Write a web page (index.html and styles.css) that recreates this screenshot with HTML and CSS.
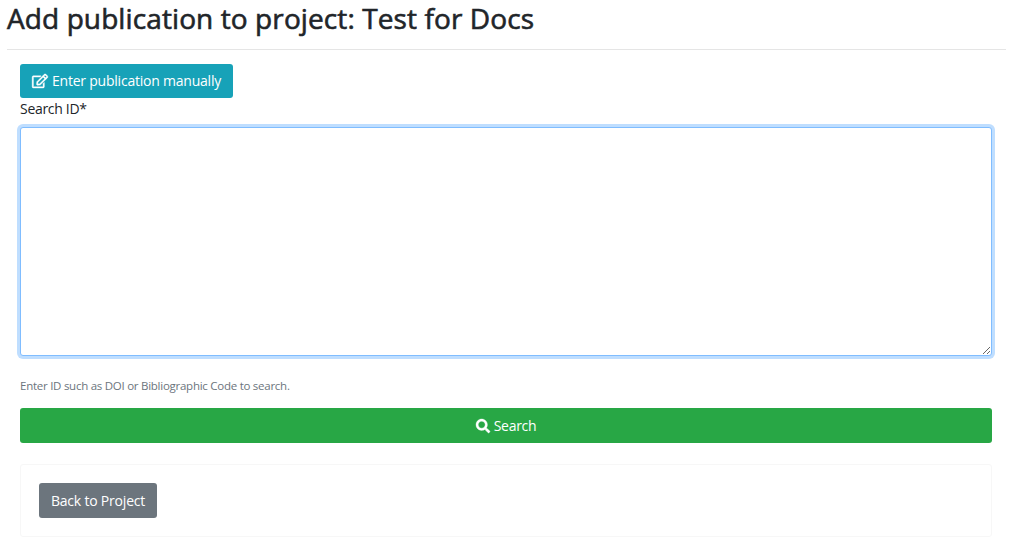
FILE: index.html
```html
<!DOCTYPE html>
<html lang="en">
<head>
<meta charset="utf-8">
<title>Add publication</title>
<link rel="stylesheet" href="styles.css">
</head>
<body>
<h1 class="title">Add publication to project: Test for Docs</h1>
<main class="content">
<button class="btn btn-info"><svg class="icon icon-edit" viewBox="0 0 576 512"><path d="M402.3 344.9l32-32c5-5 13.7-1.5 13.7 5.7V464c0 26.500-21.500 48-48 48H48c-26.500 0-48-21.500-48-48V112c0-26.500 21.500-48 48-48h273.500c7.100 0 10.700 8.600 5.700 13.700l-32 32c-1.500 1.500-3.500 2.300-5.700 2.300H48v352h352V350.500c0-2.100.8-4.100 2.300-5.600zm156.600-201.800L296.300 405.700l-90.400 10c-26.200 2.900-48.500-19.200-45.600-45.600l10-90.400L432.900 17.100c22.900-22.900 59.900-22.900 82.700 0l43.200 43.200c22.900 22.900 22.900 60 .1 82.800zM460.100 174L402 115.900 216.200 301.800l-7.300 65.300 65.300-7.300L460.100 174zm64.800-79.700l-43.200-43.200c-4.100-4.100-10.800-4.100-14.800 0L436 82l58.100 58.100 30.900-30.900c4-4.200 4-10.800-.1-14.900z"/></svg><span>Enter publication manually</span></button>
<label class="label" for="sid">Search ID*</label>
<textarea id="sid" class="search-input"></textarea>
<small class="help">Enter ID such as DOI or Bibliographic Code to search.</small>
<button class="btn btn-success"><svg class="icon icon-search" viewBox="0 0 512 512"><path d="M505 442.700L405.300 343c-4.500-4.500-10.600-7-17-7H372c27.600-35.300 44-79.700 44-128C416 93.100 322.900 0 208 0S0 93.100 0 208s93.100 208 208 208c48.300 0 92.700-16.400 128-44v16.300c0 6.400 2.500 12.500 7 17l99.700 99.700c9.400 9.400 24.600 9.400 33.900 0l28.300-28.300c9.400-9.400 9.400-24.600.1-34zM208 336c-70.700 0-128-57.200-128-128 0-70.700 57.200-128 128-128 70.700 0 128 57.200 128 128 0 70.700-57.200 128-128 128z"/></svg><span>Search</span></button>
<div class="card"><button class="btn btn-secondary"><span>Back to Project</span></button></div>
</main>
</body>
</html>
```

FILE: styles.css
```css
* { box-sizing: border-box; }
body {
  margin: 0;
  padding: 0 16px 0 7px;
  font-family: "Segoe UI", "Open Sans", "Noto Sans", sans-serif;
  font-size: 14px;
  color: #212529;
  background: #fff;
}
.title {
  margin: 0;
  height: 50px;
  border-bottom: 1px solid #e5e5e5;
  font-size: 28px;
  font-weight: 500;
  line-height: 36px;
  letter-spacing: 0.1px;
  -webkit-text-stroke: 0.6px #212529;
  white-space: nowrap;
}
.content {
  display: flex;
  flex-direction: column;
  padding: 14px 14px 0 13px;
}
.btn {
  display: flex;
  align-items: center;
  justify-content: center;
  gap: 4px;
  height: 35px;
  padding: 0;
  border: 0;
  border-radius: 3px;
  color: #fff;
  font: inherit;
  white-space: nowrap;
}
.icon {
  overflow: visible;
  fill: currentColor;
  stroke: currentColor;
  stroke-width: 14;
}
.icon-edit { width: 16px; height: 14px; }
.icon-search { width: 14px; height: 14px; }
.btn-info { width: 213px; height: 34px; padding-bottom: 1px; background: #17a2b8; letter-spacing: -0.22px; }
.btn-success { background: #28a745; letter-spacing: -0.3px; }
.btn-secondary { width: 118px; background: #6c757d; letter-spacing: -0.2px; }
.label { height: 29px; line-height: 22px; letter-spacing: -0.3px; }
.search-input {
  height: 229px;
  margin: 0;
  border: 1px solid #80bdff;
  border-radius: 3px;
  outline: 0;
  box-shadow: 0 0 0 3px #bfdeff;
  resize: vertical;
}
.help {
  height: 52px;
  padding-top: 21px;
  color: #6c757d;
  font-size: 11.5px;
  line-height: 17px;
  letter-spacing: -0.26px;
}
.card {
  height: 73px;
  margin-top: 21px;
  padding: 18px;
  border: 1px solid #f7f7f7;
  border-radius: 3px;
}
```
